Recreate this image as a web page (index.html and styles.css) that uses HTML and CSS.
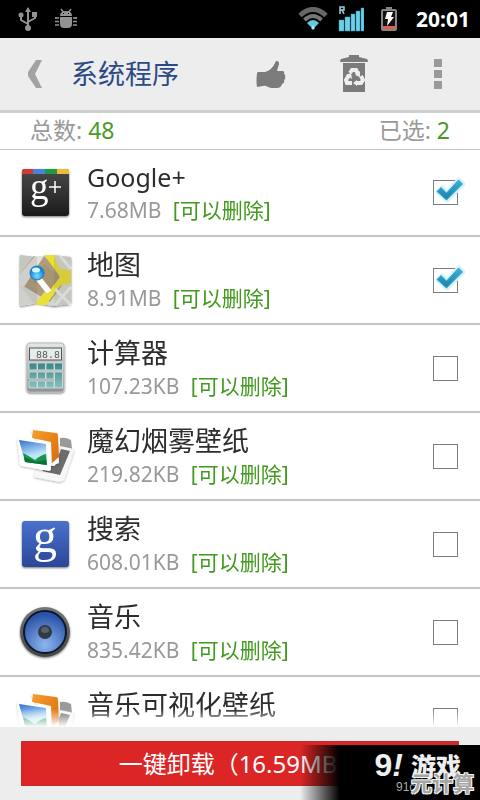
FILE: index.html
```html
<!DOCTYPE html>
<html lang="zh-CN">
<head>
<meta charset="utf-8">
<meta name="viewport" content="width=device-width, initial-scale=1">
<title>系统程序</title>
<link rel="stylesheet" href="styles.css">
</head>
<body>
<svg class="defs" aria-hidden="true">
  <defs>
    <linearGradient id="dark" x2="0" y2="1"><stop stop-color="#4a4a4a"/><stop offset="1" stop-color="#1c1c1c"/></linearGradient>
    <linearGradient id="blue" x2="0" y2="1"><stop stop-color="#4a72cc"/><stop offset="1" stop-color="#2a4699"/></linearGradient>
    <linearGradient id="silver" x2="0" y2="1"><stop stop-color="#e4e6e6"/><stop offset="1" stop-color="#8b9292"/></linearGradient>
    <linearGradient id="orange" x2="1" y2="1"><stop stop-color="#f5a02c"/><stop offset="1" stop-color="#d9690c"/></linearGradient>
    <linearGradient id="sky" x2="0.3" y2="1"><stop stop-color="#2f6fd0"/><stop offset="0.7" stop-color="#bfe6f8"/></linearGradient>
    <linearGradient id="key" x2="0" y2="1"><stop stop-color="#3c8486"/><stop offset="1" stop-color="#8cc0c0"/></linearGradient>
    <linearGradient id="tick" x2="0" y2="1"><stop stop-color="#3db0d6"/><stop offset="1" stop-color="#1b7fa8"/></linearGradient>
    <linearGradient id="rim" x2="0" y2="1"><stop stop-color="#777"/><stop offset="1" stop-color="#444"/></linearGradient>
    <radialGradient id="cone" cy="0.8" r="0.7"><stop stop-color="#8fb6ee"/><stop offset="1" stop-color="#2c55aa"/></radialGradient>
    <radialGradient id="pin" cy="0.7"><stop stop-color="#7be2ff"/><stop offset="1" stop-color="#1686d8"/></radialGradient>
    <filter id="shade" x="-20%" y="-20%" width="140%" height="150%"><feDropShadow dx="0" dy="1" stdDeviation="1.2" flood-opacity="0.55"/></filter>
    <filter id="soft" x="-20%" y="-20%" width="140%" height="150%"><feDropShadow dx="0" dy="1" stdDeviation="1" flood-opacity="0.3"/></filter>
    <symbol id="check" viewBox="0 0 32 28">
      <path d="M5 15l4-4 5 5L26 3l4 4L14 23z" fill="none" stroke="#d5f3fd" stroke-width="5" stroke-linejoin="round"/>
      <path d="M4 14.500l4-4 5.500 5.500L25.500 3l4 4L13.500 23z" fill="url(#tick)" stroke="#38a8cd" stroke-width="1" stroke-linejoin="round"/>
    </symbol>
    <symbol id="gallery" viewBox="0 0 60 60">
      <path d="M45 12q6-1 11 2l1 9-12-1z" fill="#9a9a9a"/>
      <path d="M45 20l14 3q0 2-1 5l-9 26-4 2-26-5 1-6z" fill="#f7f7f7" filter="url(#soft)"/>
      <path d="M46 23l9 2-10 24-18-4 8-5h5z" fill="#6c6c6c"/>
      <path d="M16 4l27 4 1 29-8 3z" fill="#fff" filter="url(#soft)"/>
      <path d="M18 4l23 3q2 0 2 3l1 21-7 6-1-21-19-4z" fill="url(#orange)"/>
      <path d="M2 12l33 5 1 26q0 2-2 2L7 40q-2 0-2-2z" fill="#fff" filter="url(#soft)"/>
      <path d="M4 14l27 4 1 21-22-3z" fill="url(#sky)"/>
      <path d="M8 27q6 3 12 7 6-5 11-6l1 11-22-3z" fill="#189447"/>
      <path d="M9 31l1 5 22 3-1-5-10 2z" fill="#087136"/>
    </symbol>
  </defs>
</svg>
<div class="app">
  <div class="status">
    <svg class="usb" viewBox="0 0 20 26" fill="none" stroke="#929292" stroke-width="2">
      <path d="M10 22V3M10 18L3 14V9M10 16l7-4V9"/>
      <path d="M7 6l3-5 3 5zM14 6h5v5h-5z" fill="#929292" stroke="none"/>
      <circle cx="3" cy="9" r="2.500" fill="#929292" stroke="none"/><circle cx="10" cy="22" r="3" fill="#929292" stroke="none"/>
    </svg>
    <svg class="bug" viewBox="0 0 22 22" fill="#929292">
      <path d="M5 8q0-5 6-5t6 5zM5 9h12v7q0 4-4 4H9q-4 0-4-4z"/>
      <path d="M6 1l3 4M16 1l-3 4M0 10h4M0 13.500h4M0 17h4M18 10h4M18 13.500h4M18 17h4M1 9v2M21 9v2" stroke="#929292" stroke-width="1.500"/>
      <path d="M8 5h1v1H8zM13 5h1v1h-1z" fill="#000"/>
    </svg>
    <span class="grow"></span>
    <svg class="wifi" viewBox="0 0 30 24" fill="none">
      <path d="M2 8.500Q15-3.500 28 8.500" stroke="#666" stroke-width="5"/><path d="M6.500 13Q15 5 23.500 13" stroke="#777" stroke-width="4"/>
      <path d="M9 16q6-6 12 0l-4 4h-4z" fill="#63c9e2"/><path d="M15 18l2 3-2 2-2-2z" fill="#a6ebfa"/>
    </svg>
    <svg class="signal" viewBox="0 0 26 26">
      <path d="M1 14h5v11H1zM7 11h5v14H7zM13 8h4v17h-4zM18 5h4v20h-4zM23 2h3v23h-3z" fill="#6fcfe6" stroke="#2f94b2" stroke-width="0.500"/>
      <path d="M2 8V1h4v3H2M4 4l2 4" fill="none" stroke="#a5ccdc" stroke-width="1.500"/>
    </svg>
    <svg class="battery" viewBox="0 0 18 24">
      <path d="M6 0h6v3H6z" fill="#858585"/><rect x="2" y="3" width="14" height="20" rx="1" fill="#111" stroke="#858585" stroke-width="2"/>
      <path d="M3 19h12v3H3z" fill="#e0604d"/><path d="M7 5h6l-2 5h3L7 19l1-7H5z" fill="#fff"/>
    </svg>
    <time class="clock">20:01</time>
  </div>
  <header class="header">
    <button class="back" aria-label="返回"><svg viewBox="0 0 14 28"><path d="M8 0h6L7 14l7 14H8L0 16v-4z" fill="#a2a2a2"/></svg></button>
    <h1>系统程序</h1>
    <button class="like" aria-label="推荐"><svg viewBox="0 0 30 28"><path d="M1 13q0-1 2-1h6q7-2 10-9 1-3 2-2 2 0 2 3l-2 7h6q2 1 1 3 2 1 1 3 1 2-1 3 1 3-2 4-1 4-5 4-4 1-9-1-3-2-5-1l-6 1q-1-6 0-14z" fill="#7b7b7b"/></svg></button>
    <button class="trash" aria-label="回收站"><svg viewBox="0 0 28 38">
      <path d="M9 0h10v2l8 2q2 3 0 3H1q-2 0 0-3l8-2zM3 8h22v29H3z" fill="#7b7b7b"/>
      <g fill="none" stroke="#eee" stroke-width="4"><path d="M10 18l2-3h4l2 4M21 21l2 4-2 3h-5M12 28H7l-1-3 3-5"/></g>
      <path d="M20 16v6l-5-2zM17 25v6l-4-3zM6 20l5-2 1 6z" fill="#eee"/>
    </svg></button>
    <button class="more" aria-label="更多"><svg viewBox="0 0 8 30"><path d="M0 0h8v8H0zM0 11h8v8H0zM0 22h8v8H0z" fill="#9a9a9a"/></svg></button>
  </header>
  <div class="counts"><span>总数: <b>48</b></span><span>已选: <b>2</b></span></div>
  <ul class="list">
    <li><label class="row">
      <svg class="icon" viewBox="0 0 60 60"><rect x="7" y="7" width="47" height="47" rx="3" fill="url(#dark)" filter="url(#shade)"/><path d="M7 12v-3q0-2 2-2h10v5z" fill="#d23b35"/><path d="M18 7h12v5H18z" fill="#4a83dc"/><path d="M30 7h12v5H30z" fill="#219b42"/><path d="M42 7h10q2 0 2 2v3H42z" fill="#efbb38"/><text class="glyph-plus" x="15" y="37">g</text><path d="M40 19v12M34 25h12" stroke="#fff" stroke-width="1.500"/></svg>
      <span class="info"><span class="name latin">Google+</span><span class="meta">7.68MB <em>[可以删除]</em></span></span>
      <span class="box"><input type="checkbox" checked><svg class="mark"><use href="#check"/></svg></span>
    </label></li>
    <li><label class="row">
      <svg class="icon" viewBox="0 0 60 60"><path d="M5 5l17 2 17-2 17 2v47l-17 2-17-3-17 3z" fill="#d6d6d0" filter="url(#shade)"/>
        <path d="M5 24l14-18h10l24 21-18 25L5 34z" fill="#ad9c7e"/><path d="M5 24L20 6h9L9 37l-4-2zM5 35l14 19-14 2z" fill="#e2e2dc"/>
        <path d="M29 5h10l5 13 12 3v12l-11 3-14 19h-11l12-17 12-13z" fill="#e9df35"/><path d="M29 14l16 13-13 17-14-13z" fill="#a79470"/>
        <path d="M40 39l16 16M56 37L40 55M45 6l11 13" stroke="#eeeee8" stroke-width="3"/><path d="M23 28l11 14" stroke="#fff" stroke-width="6"/>
        <path d="M39 5l17 2v47l-17 2zM5 5l17 2v46l-17 3z" fill="#555" opacity="0.120"/>
        <circle cx="22" cy="23" r="7" fill="url(#pin)" stroke="#1b79bd"/><ellipse cx="21" cy="20" rx="4" ry="2.500" fill="#d9f5ff"/></svg>
      <span class="info"><span class="name">地图</span><span class="meta">8.91MB <em>[可以删除]</em></span></span>
      <span class="box"><input type="checkbox" checked><svg class="mark"><use href="#check"/></svg></span>
    </label></li>
    <li><label class="row">
      <svg class="icon" viewBox="0 0 60 60"><rect x="12" y="5" width="37" height="49" rx="3" fill="url(#silver)" stroke="#bbb" filter="url(#shade)"/><rect x="14.500" y="10" width="32" height="12" fill="#e6eceb" stroke="#555"/><text class="digits" x="21" y="20">88.8</text>
        <path d="M14 25h8v7h-8zM22.500 25h8v7h-8zM31 25h8v7h-8zM39.500 25h8v7h-8zM14 34h8v7h-8zM22.500 34h8v7h-8zM31 34h8v7h-8zM14 43h8v7h-8zM22.500 43h8v7h-8zM31 43h8v7h-8zM39.500 34h8v16h-8z" fill="url(#key)" stroke="#d5e2e2" stroke-width="0.800"/></svg>
      <span class="info"><span class="name">计算器</span><span class="meta">107.23KB <em>[可以删除]</em></span></span>
      <span class="box"><input type="checkbox"></span>
    </label></li>
    <li><label class="row">
      <svg class="icon"><use href="#gallery"/></svg>
      <span class="info"><span class="name">魔幻烟雾壁纸</span><span class="meta">219.82KB <em>[可以删除]</em></span></span>
      <span class="box"><input type="checkbox"></span>
    </label></li>
    <li><label class="row">
      <svg class="icon" viewBox="0 0 60 60"><rect x="7" y="7" width="47" height="46" rx="3" fill="url(#blue)" filter="url(#shade)"/><text class="glyph-search" x="18" y="38">g</text></svg>
      <span class="info"><span class="name">搜索</span><span class="meta">608.01KB <em>[可以删除]</em></span></span>
      <span class="box"><input type="checkbox"></span>
    </label></li>
    <li><label class="row">
      <svg class="icon" viewBox="0 0 60 60"><circle cx="30" cy="30" r="25" fill="url(#rim)" filter="url(#shade)"/><circle cx="30" cy="30" r="21" fill="url(#cone)" stroke="#0d1730" stroke-width="2"/><circle cx="30" cy="30" r="7" fill="#333a47"/><ellipse cx="30" cy="28" rx="4" ry="3" fill="#59606c"/></svg>
      <span class="info"><span class="name">音乐</span><span class="meta">835.42KB <em>[可以删除]</em></span></span>
      <span class="box"><input type="checkbox"></span>
    </label></li>
    <li><label class="row">
      <svg class="icon"><use href="#gallery"/></svg>
      <span class="info"><span class="name">音乐可视化壁纸</span></span>
      <span class="box"><input type="checkbox"></span>
    </label></li>
  </ul>
  <footer class="footer"><button class="uninstall">一键卸载（16.59MB）</button></footer>
  <div class="stamp" aria-hidden="true">
    <span class="site">91c</span>
    <span class="brand"><b>9<i>!</i></b>游戏</span>
    <span class="owner">元计算</span>
  </div>
</div>
</body>
</html>
```
FILE: styles.css
```css
* { box-sizing: border-box; }
body { margin: 0; background: #fff; font-family: "Noto Sans", "Noto Sans CJK SC", sans-serif; }
button { border: 0; padding: 0; background: none; font: inherit; }
svg { display: block; flex: none; }
.defs { position: absolute; width: 0; height: 0; }
.app { position: relative; display: flex; flex-direction: column; height: 100vh; overflow: hidden; }

.status { display: flex; align-items: center; flex: none; height: 38px; padding: 0 10px 0 18px; background: #000; }
.grow { flex: 1; }
.usb { width: 20px; height: 26px; margin-right: 17px; }
.bug { width: 22px; height: 22px; }
.wifi { width: 30px; height: 24px; margin-right: 10px; }
.signal { width: 26px; height: 26px; margin-right: 16px; }
.battery { width: 18px; height: 24px; margin-right: 18px; }
.clock { color: #fff; font: bold 21px/38px "Noto Sans", sans-serif; }

.header { display: flex; align-items: center; flex: none; height: 75px; padding: 0 38px 0 28px; background: #ededed; border-bottom: 3px solid #cfcfcf; }
.header h1 { flex: 1; margin: 0 0 0 29px; color: #2b4a85; font-size: 27px; font-weight: 400; line-height: 40px; }
.back svg { width: 14px; height: 28px; }
.like svg { width: 30px; height: 28px; }
.trash { margin: 0 66px 0 54px; }
.trash svg { width: 28px; height: 38px; }
.more svg { width: 8px; height: 30px; }

.counts { display: flex; justify-content: space-between; flex: none; height: 37px; margin-bottom: -1px; padding: 0 30px; border-bottom: 1px solid #c6c6c6; color: #999; font-size: 23px; line-height: 34px; }
.counts b { color: #4a9a28; font-weight: 400; }

.list { flex: 1; min-height: 0; margin: 0; padding: 0; overflow: hidden; list-style: none; -webkit-mask-image: linear-gradient(to top, transparent, #000 18px); mask-image: linear-gradient(to top, transparent, #000 18px); }
.row { display: flex; align-items: center; height: 88px; padding: 0 22px 0 15px; border-bottom: 2px solid #c6c6c6; }
.icon { width: 60px; height: 60px; }
.info { display: flex; flex: 1; flex-direction: column; height: 66px; margin-left: 12px; }
.name { color: #2d2d2d; font-size: 27px; line-height: 36px; }
.latin { font-size: 25px; }
.meta { color: #999; font-size: 21px; line-height: 30px; }
.meta em { margin-left: 6px; color: #409a1c; font-style: normal; }
.box { position: relative; width: 25px; height: 25px; }
.box input { display: block; width: 25px; height: 25px; margin: 0; appearance: none; background: #fff; border: 1px solid #7d7d7d; }
.mark { position: absolute; top: -3px; left: 0; width: 32px; height: 28px; }
.glyph-plus { fill: #fff; font: 37px "Liberation Serif", serif; }
.glyph-search { fill: #fff; font: 48px "Liberation Serif", serif; }
.digits { fill: #555; font: 10px "Liberation Mono", monospace; }

.footer { flex: none; padding: 14px 21px; background: #ededed; }
.uninstall { display: block; width: 100%; height: 45px; color: #fff; background: #dc2626; border: 1px solid #c52b2b; font-size: 24px; line-height: 43px; }

.stamp { position: absolute; right: 0; bottom: 0; width: 180px; height: 55px; background: linear-gradient(90deg, transparent, #000 22%); }
.stamp span { position: absolute; white-space: nowrap; }
.stamp .brand { top: 2px; right: 19px; color: #eee; font: 900 25px/36px "Noto Sans CJK SC", sans-serif; }
.brand b { margin-right: 8px; font: bold 32px/36px "Liberation Sans", sans-serif; }
.stamp .site { top: 34px; left: 96px; color: #aaa; font: 12px/16px "Liberation Sans", sans-serif; }
.stamp .owner { right: 6px; bottom: 2px; color: #a4a4a4; font: bold 21px/32px "Noto Sans CJK SC", sans-serif; text-shadow: 1px 1px #f4f4f4, -1px 1px #f4f4f4, 1px -1px #f4f4f4, -1px -1px #f4f4f4; }
```
